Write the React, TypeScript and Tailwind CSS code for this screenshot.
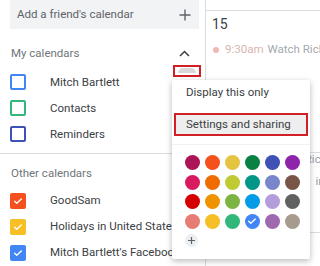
import React from 'react';

const font = { fontFamily: 'Roboto, "Liberation Sans", sans-serif' };

interface Cal {
  name: string;
  color: string;
  checked: boolean;
}

const myCals: Cal[] = [
  { name: 'Mitch Bartlett', color: '#4285f4', checked: false },
  { name: 'Contacts', color: '#33b679', checked: false },
  { name: 'Reminders', color: '#3f51b5', checked: false },
];

const otherCals: Cal[] = [
  { name: 'GoodSam', color: '#f4511e', checked: true },
  { name: 'Holidays in United States', color: '#f6bf26', checked: true },
  { name: "Mitch Bartlett's Facebook Events", color: '#4285f4', checked: true },
];

const swatches = [
  '#ad1457', '#f4511e', '#e4c441', '#0b8043', '#3f51b5', '#8e24aa',
  '#d81b60', '#ef6c00', '#c0ca33', '#009688', '#7986cb', '#795548',
  '#d50000', '#f09300', '#7cb342', '#039be5', '#b39ddb', '#616161',
  '#e67c73', '#f6bf26', '#33b679', '#4285f4', '#9e69af', '#a79b8e',
];

const Check = ({ size = 10 }: { size?: number }) => (
  <svg width={size} height={size} viewBox="0 0 24 24" fill="none" stroke="white" strokeWidth="3.2" strokeLinecap="round" strokeLinejoin="round">
    <path d="M4 12.5l5 5L20 7" />
  </svg>
);

const CalRow = ({ cal }: { cal: Cal }) => (
  <div className="flex h-[26px] items-center whitespace-nowrap">
    <div className="ml-[10px] w-[40px] shrink-0">
      {cal.checked ? (
        <div className="flex h-[16px] w-[16px] items-center justify-center rounded-[2px]" style={{ backgroundColor: cal.color }}>
          <Check />
        </div>
      ) : (
        <div className="h-[16px] w-[16px] rounded-[2px] border-2" style={{ borderColor: cal.color }} />
      )}
    </div>
    <span className="text-[11.5px] text-[#3c4043]">{cal.name}</span>
  </div>
);

export default function App() {
  return (
    <div className="relative flex h-[266px] w-[320px] overflow-hidden bg-white" style={font}>
      {/* sidebar */}
      <div className="flex w-[206px] shrink-0 flex-col border-r border-[#dadce0]">
        <div className="mx-[10px] flex h-[30px] w-[189px] items-center justify-between bg-[#f1f3f4] pl-[7px] pr-[8px]">
          <span className="text-[11.5px] text-[#5f6368]">Add a friend's calendar</span>
          <svg width="12" height="12" viewBox="0 0 12 12" stroke="#5f6368" strokeWidth="1.4">
            <path d="M6 0.5v11M0.5 6h11" />
          </svg>
        </div>
        <div className="mt-[13px] flex h-[24px] items-center justify-between pl-[11px] pr-[15px]">
          <span className="text-[11.5px] text-[#70757a]">My calendars</span>
          <svg width="11" height="7" viewBox="0 0 11 7" fill="none" stroke="#3c4043" strokeWidth="1.5">
            <path d="M1 6l4.5-4.5L10 6" />
          </svg>
        </div>
        <div className="relative mt-[4px]">
          {myCals.map((c) => (
            <CalRow key={c.name} cal={c} />
          ))}
          <div className="absolute left-[173px] top-[-4px] h-[12px] w-[28px] border-2 border-[#d21f26]">
            <div className="mx-auto mt-[1px] h-[5px] w-[18px] rounded-t-full bg-[#d8d8d8]" />
          </div>
        </div>
        <div className="mt-[6px] border-t border-[#dadce0]" />
        <div className="flex h-[40px] items-center pl-[11px]">
          <span className="text-[11.5px] text-[#70757a]">Other calendars</span>
        </div>
        <div className="-mt-[5px]">
          {otherCals.map((c) => (
            <CalRow key={c.name} cal={c} />
          ))}
        </div>
      </div>

      {/* main */}
      <div className="flex flex-1 flex-col whitespace-nowrap">
        <div className="h-[11px] border-b border-[#dadce0]" />
        <div className="pl-[6px] pt-[3px] text-[14px] text-[#3c4043]">15</div>
        <div className="mt-[6px] flex items-center pl-[7px] text-[11.5px]">
          <span className="mr-[6px] h-[6px] w-[6px] rounded-full bg-[#f1b7b3]" />
          <span className="text-[#d9b4b0]">9:30am</span>
          <span className="ml-[4px] text-[#a5a9ad]">Watch Richter</span>
        </div>
        <div className="mt-[94px] border-t border-[#dadce0]" />
        <div className="mt-[-2px] flex justify-end text-[11.5px] text-[#9aa0a6]">
          <span className="-mr-[2px]">Watch Richter</span>
        </div>
        <div className="mt-[4px] flex justify-end text-[11.5px] text-[#9aa0a6]">
          <span className="-mr-[2px]">in Re</span>
        </div>
        <div className="mt-[42px] border-t border-[#dadce0]" />
      </div>

      {/* menu */}
      <div className="absolute left-[172px] top-[80px] h-[179px] w-[138px] rounded-[2px] bg-white shadow-[0_2px_6px_rgba(0,0,0,0.28)]">
        <div className="flex h-[26px] items-center pl-[14px] text-[11.5px] text-[#3c4043]">Display this only</div>
        <div className="mx-[2px] mt-[7px] flex h-[23px] items-center border-2 border-[#d21f26] bg-[#eeeeee] pl-[10px] text-[11.5px] text-[#3c4043]">
          Settings and sharing
        </div>
        <div className="mt-[8px] border-t border-[#f1f1f1]" />
        <div className="mt-[8px] grid grid-cols-[repeat(6,20px)] auto-rows-[19.5px] pl-[10px]">
          {swatches.map((c, i) => (
            <div key={i} className="flex items-center justify-center">
              <div className="flex h-[15px] w-[15px] items-center justify-center rounded-full" style={{ backgroundColor: c }}>
                {i === 21 && <Check size={10} />}
              </div>
            </div>
          ))}
        </div>
        <div className="mt-[3px] flex pl-[13px]">
          <div className="flex h-[13px] w-[13px] items-center justify-center rounded-full bg-[#eceff1]">
            <svg width="7" height="7" viewBox="0 0 7 7" stroke="#5f6368" strokeWidth="1.2">
              <path d="M3.5 0v7M0 3.5h7" />
            </svg>
          </div>
        </div>
      </div>
    </div>
  );
}
